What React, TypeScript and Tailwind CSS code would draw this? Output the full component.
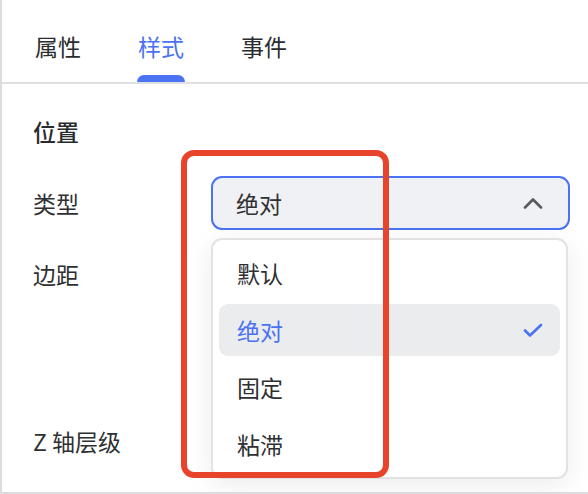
import React, { useState } from "react";

const tabs = ["属性", "样式", "事件"];
const options = ["默认", "绝对", "固定", "粘滞"];

function ChevronUp() {
  return (
    <svg width="20" height="12" viewBox="0 0 20 12" fill="none">
      <path d="M2 10.5L10 2.5L18 10.5" stroke="#575a60" strokeWidth="2.6" strokeLinecap="round" strokeLinejoin="round" />
    </svg>
  );
}

function Check() {
  return (
    <svg width="20" height="15" viewBox="0 0 20 15" fill="none">
      <path d="M2 7.5L7 12.5L18 2" stroke="#4a72f2" strokeWidth="2.6" strokeLinecap="round" strokeLinejoin="round" />
    </svg>
  );
}

export default function App() {
  const [active] = useState(1);
  const [value] = useState("绝对");

  return (
    <div
      className="relative w-[588px] h-[494px] bg-white border-l-2 border-b-2 border-[#dcdce0] overflow-hidden text-[#2f3033]"
      style={{ fontFamily: '"Noto Sans CJK SC", "Noto Sans", sans-serif' }}
    >
      {/* tabs */}
      <div className="flex h-[84px] border-b-2 border-[#e0e0e2] pl-[33px] gap-[57px]">
        {tabs.map((t, i) => (
          <div key={t} className="relative flex flex-col items-center">
            <span className={`mt-[30px] text-[23px] leading-[32px] ${i === active ? "text-[#4a72f2]" : "text-[#2b2c2f]"}`}>{t}</span>
            {i === active && (
              <div className="absolute bottom-0 w-[48px] h-[7px] rounded-t-[7px] bg-[#4a72f2]" />
            )}
          </div>
        ))}
      </div>

      {/* content */}
      <div className="flex flex-col pl-[31px] pt-[31px]">
        <div className="text-[23px] leading-[32px] font-medium text-[#2a2b2e]">位置</div>

        <div className="flex items-center mt-[29px]">
          <span className="w-[178px] text-[23px] leading-[32px]">类型</span>
          <div className="flex items-center justify-between w-[359px] h-[54px] rounded-[11px] border-2 border-[#4a72f2] bg-[#f0f1f4] pl-[23px] pr-[25px]">
            <span className="text-[23px] leading-[32px] text-[#2f3033]">{value}</span>
            <ChevronUp />
          </div>
        </div>

        <div className="flex items-center mt-[28px]">
          <span className="w-[178px] text-[23px] leading-[32px]">边距</span>
        </div>

        <div className="flex items-center mt-[135px]">
          <span className="text-[23px] leading-[32px]">Z 轴层级</span>
        </div>
      </div>

      {/* dropdown menu */}
      <div className="absolute left-[209px] top-[238px] w-[357px] h-[241px] rounded-[11px] border-2 border-[#e2e2e5] bg-white shadow-[0_6px_28px_rgba(0,0,0,0.08)] px-[6px] py-[7px] flex flex-col gap-[4.5px]">
        {options.map((o) => {
          const sel = o === value;
          return (
            <div
              key={o}
              className={`flex items-center justify-between h-[53px] rounded-[9px] pl-[18px] pr-[17px] ${sel ? "bg-[#ebeced]" : ""}`}
            >
              <span className={`text-[23px] leading-[32px] ${sel ? "text-[#4a72f2]" : "text-[#2f3033]"}`}>{o}</span>
              {sel && <Check />}
            </div>
          );
        })}
      </div>

      {/* annotation box */}
      <div className="absolute left-[179px] top-[150px] w-[208px] h-[328px] rounded-[13px] border-[6px] border-[#e8442c] pointer-events-none" />
    </div>
  );
}
